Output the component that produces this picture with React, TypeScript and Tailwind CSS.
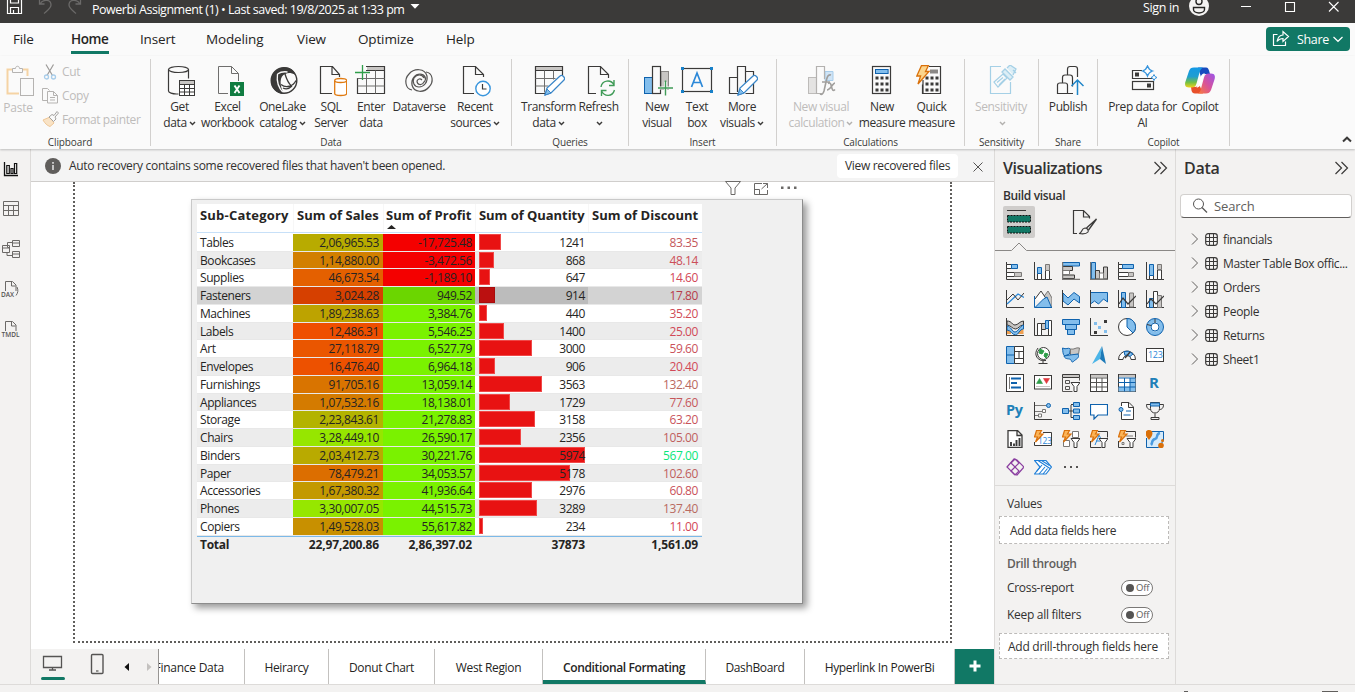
import React from "react";

type IconProps = { children: React.ReactNode; w?: number; h?: number; cls?: string };

const Svg = ({ children, w = 32, h = 32, cls = "" }: IconProps) => (
  <svg width={w} height={h} viewBox={`0 0 ${w} ${h}`} fill="none" className={`shrink-0 ${cls}`}>
    {children}
  </svg>
);

const INK = "#3b3a39";
const BLUE = "#0f62ad";
const SKY = "#83beec";
const ASH = "#c8c6c4";

const Caret = ({ color = INK }: { color?: string }) => (
  <svg width="7" height="5" viewBox="0 0 7 5" fill="none" className="ml-[2px] inline-block align-[1px]">
    <path d="M1 1l2.5 2.6L6 1" stroke={color} strokeWidth="1.4" />
  </svg>
);

/* ---------- ribbon icons, 32px wide boxes ---------- */

const Bolt = () => <path d="M5.500 .5h7l-3 6h3.500L2 19l2.600-8H.8z" fill="#fcd58c" stroke="#d9700a" strokeWidth="1.300" />;

const icons: Record<string, React.ReactNode> = {
  getData: (
    <Svg>
      <path d="M4.500 4.500v21.500c0 1.700 4 3 8 3h2M24.500 4.500v9" stroke={INK} strokeWidth="1.200" />
      <ellipse cx="14.500" cy="4.500" rx="10" ry="3" stroke={INK} strokeWidth="1.200" />
      <rect x="15.500" y="15.500" width="15" height="15" fill="#fff" stroke={INK} />
      <path d="M16 17.500h14" stroke={ASH} strokeWidth="3" />
      <path d="M15.500 19.500h15M15.500 23.500h15M15.500 27h15M20.500 19.500v11M25.500 19.500v11" stroke={INK} />
    </Svg>
  ),
  excel: (
    <Svg>
      <path d="M16 28.500H6.500v-27h13l7 7V16M19.500 1.500v7h7" stroke="#6f6e6d" />
      <rect x="18" y="17" width="14" height="14" fill="#107c41" />
      <path d="M22.500 20.500l5 7.500M27.500 20.500l-5 7.500" stroke="#fff" strokeWidth="1.900" />
    </Svg>
  ),
  onelake: (
    <Svg>
      <path d="M12 4C18 0 27 3 28.500 10 24 7.500 21 7.500 18.500 9 12 11 12.500 21 17 29 9 29 3.500 22 4 15 4.500 9 8 5.500 12 4z" fill={INK} />
      <path d="M10.500 9c-1 7 1 14 6 19M10.500 9c3-2 7-2.500 10-2" stroke="#fafafa" strokeWidth="1.300" />
      <circle cx="17" cy="15.500" r="12.800" stroke={INK} strokeWidth="1.400" />
      <path d="M18 9c1.500 5 3 9 6.500 12M14 19.500c5 4 12 2 15-4M25 21c-3 3-6 3.500-9 2" stroke={INK} strokeWidth="1.300" />
    </Svg>
  ),
  sql: (
    <Svg>
      <path d="M17 28.500H5.500v-27h12l7 8V12M17 1.500v8h8" stroke={INK} strokeWidth="1.200" />
      <path d="M19.700 15.500v13c0 1 2.500 2 6 2s6-1 6-2v-13" fill="#fff" stroke="#e07a10" strokeWidth="1.300" />
      <ellipse cx="25.700" cy="15.500" rx="6" ry="2" fill="#fff" stroke="#e07a10" strokeWidth="1.300" />
    </Svg>
  ),
  enter: (
    <Svg>
      <path d="M12 3.500h17" stroke={ASH} strokeWidth="4" />
      <path d="M11 1.500h18.500v27H2.500V13M11 5.500h18.500" stroke={INK} strokeWidth="1.200" />
      <path d="M2.500 13.500h27M2.500 21h27M11.500 9v19.500M20.500 5.500v23" stroke="#6f6e6d" />
      <path d="M7.500 0v15M0 7.500h15" stroke="#2f9e4a" strokeWidth="1.300" />
    </Svg>
  ),
  dataverse: (
    <Svg>
      <path
        d="M9 25C2 24 1 14 6 9c5-6 16-6 18 2 1 6-3 11-8 11-5 0-7-5-5-9 3-4 8-4 10 0M23 7c7 1 8 10 3 15-5 6-15 6-17-2-1-6 3-11 8-11 5 0 7 5 4 8-2 4-7 3-7-1 1-2 3-3 5-1"
        stroke="#555453"
        strokeWidth="1.200"
      />
    </Svg>
  ),
  recent: (
    <Svg>
      <path d="M15 28.500H4.500v-27h12l8 8V12M16.500 1.500v8h8" stroke={INK} strokeWidth="1.200" />
      <circle cx="24" cy="23.500" r="7.200" fill="#fff" stroke="#3a96dd" strokeWidth="1.400" />
      <path d="M23.500 19V24H27.500" stroke={INK} strokeWidth="1.200" />
    </Svg>
  ),
  transform: (
    <Svg>
      <path d="M3 3.500h27" stroke={ASH} strokeWidth="4" />
      <path d="M13 28.500H2.500v-27h27v9M2.500 5.500h27" stroke={INK} strokeWidth="1.200" />
      <path d="M2.500 13.500h20M2.500 21h13M11.500 5.500v22M20.500 5.500v9" stroke="#6f6e6d" />
      <path d="M12 30l2-7L27 11c2-2 6 2 4 4L18 28z" fill="#fff" stroke="#3a86c8" strokeWidth="1.300" />
      <path d="M12 30l2-6 4 4z" fill={SKY} stroke="#3a86c8" />
    </Svg>
  ),
  refresh: (
    <Svg>
      <path d="M13 28.500H5.500v-27h12l8 8V13M17.500 1.500v8h8" stroke={INK} strokeWidth="1.200" />
      <path d="M18 22c1-7 10-8 13-2M31 15v5.500h-5M31.500 25c-2 7-10 7-13 1M18.500 31v-5.500h5" stroke="#3f9b57" strokeWidth="1.400" />
    </Svg>
  ),
  newVisual: (
    <Svg>
      <rect x="3.500" y="12.500" width="8" height="16" fill={SKY} stroke={BLUE} />
      <rect x="20" y="6.500" width="7.500" height="18" fill={ASH} stroke="#8a8886" />
      <rect x="11.500" y="1.500" width="8" height="27" fill="#fafafa" stroke={INK} strokeWidth="1.200" />
      <path d="M24.500 17v13M18 23h12.500" stroke="#fafafa" strokeWidth="3" />
      <path d="M24.500 15.500v15M17 23h15" stroke="#3f9b57" strokeWidth="1.400" />
    </Svg>
  ),
  textBox: (
    <Svg>
      <rect x="1.500" y="3.500" width="29" height="23" stroke={INK} strokeWidth="1.200" />
      <path d="M10.500 22L16 8l5.500 14M12.500 17.500h7" stroke="#2b88d8" strokeWidth="1.700" />
      <path d="M0 2h3v3H0zM29 2h3v3h-3zM0 25h3v3H0zM29 25h3v3h-3z" fill="#1880c8" />
    </Svg>
  ),
  moreVisuals: (
    <Svg>
      <path d="M11.500 12.500h-8v16h9M19.500 6.500h8v6M27.500 18v10.500h-8M11.500 27v-25.500h8v17" stroke={INK} strokeWidth="1.200" />
      <path d="M12 30l2-7L27 11c2-2 6 2 4 4L18 28z" fill="#fff" stroke="#3a86c8" strokeWidth="1.300" />
      <path d="M12 30l2-6 4 4z" fill={SKY} stroke="#3a86c8" />
    </Svg>
  ),
  visualCalc: (
    <Svg>
      <rect x="3.500" y="12.500" width="8" height="16" fill="#e4e3e2" stroke="#bdbbb9" />
      <path d="M20 6.500h8v9h-8z" fill="#cfe4f6" stroke="#a8cdea" />
      <path d="M19.500 14V1.500h-8v27h6" stroke="#b3b1af" strokeWidth="1.200" />
      <path d="M26 10c-3-1-4 2-5 7l-2 9c-1 3-2 4-4 3M17 17h8M23 18.500c3-2 3 2 4 5s2 2 3 1M30 18c-2 0-5 7-8 7" stroke="#a19f9d" strokeWidth="1.600" />
    </Svg>
  ),
  measure: (
    <Svg>
      <rect x="6.500" y="1.500" width="18" height="27" stroke={INK} strokeWidth="1.200" />
      <rect x="9.500" y="4.500" width="12.600" height="4" fill={SKY} stroke={BLUE} />
      <path d="M9.500 13h13M9.500 19h13M9.500 25h13" stroke={INK} strokeWidth="3" strokeDasharray="3 2" />
    </Svg>
  ),
  quick: (
    <Svg>
      <path d="M7 28.500V15M13 1.500h11.500v27H6.500v-9" stroke={INK} strokeWidth="1.200" />
      <path d="M14 6.500h8" stroke="#8a8886" strokeWidth="4" />
      <path d="M9.500 13h13M9.500 19h13M9.500 25h13" stroke={INK} strokeWidth="3" strokeDasharray="3 2" />
      <Bolt />
    </Svg>
  ),
  sensitivity: (
    <Svg>
      <path d="M16 1.500H5.500v27h20V17" stroke="#a5d0e6" strokeWidth="1.200" />
      <path d="M9 17l9-8 4 4-9 9zM12 17.500l6-5M14 20l6-6" stroke="#a5d0e6" strokeWidth="1.200" />
      <path d="M17 7l3-3 8 8-3 3zM22 3l3-3 6 4-3 6M28 5l3 3" fill="#dceef6" stroke="#a5d0e6" strokeWidth="1.300" />
    </Svg>
  ),
  publish: (
    <Svg>
      <path d="M21 28.500H5.500V20c0-1.500 1-2 2.500-2h5c1.500 0 2.500.5 2.500 2v8.500M10.500 18v-5.500c0-1.500 1-2.500 2.500-2.500h5c1.500 0 2.500 1 2.500 2.500v9M15.500 10V4c0-1.500 1-2.500 2.500-2.500h5c1.500 0 2.500 1 2.500 2.500v8" stroke={INK} strokeWidth="1.200" />
      <path d="M25.500 30V15M19.500 21l6-6 6 6" stroke="#1f86c9" strokeWidth="1.500" />
    </Svg>
  ),
  prep: (
    <Svg>
      <path d="M15 5.500H5.500v8h21V13" stroke={INK} strokeWidth="1.200" />
      <rect x="5.500" y="16.500" width="21" height="8" stroke={INK} strokeWidth="1.200" />
      <path d="M8 7.500h4v4H8zM20 18.500h4v4h-4z" fill={INK} />
      <path d="M20.500 1c1 3 2 4 5 5-3 1-4 2-5 5-1-3-2-4-5-5 3-1 4-2 5-5z" fill="#fff" stroke="#3a96dd" strokeWidth="1.300" />
      <path d="M27 9.500l1 2 2 1-2 1-1 2-1-2-2-1 2-1z" fill="#fff" stroke="#3a96dd" />
    </Svg>
  ),
  copilot: (
    <Svg>
      <defs>
        <linearGradient id="cpA" x1="0" y1="0" x2="0" y2="1">
          <stop offset="0" stopColor="#1399e6" />
          <stop offset=".45" stopColor="#1f9ed0" />
          <stop offset=".75" stopColor="#75c043" />
          <stop offset="1" stopColor="#f2d21a" />
        </linearGradient>
        <linearGradient id="cpB" x1="1" y1="0" x2="0" y2="1">
          <stop offset="0" stopColor="#9a55ea" />
          <stop offset=".5" stopColor="#d6529c" />
          <stop offset="1" stopColor="#fb7a38" />
        </linearGradient>
      </defs>
      <path d="M14 2.500h8c2 0 2.500 1.500 3 3l1 3.500h-5c-2 0-3 1-4 3z" fill="#174bbf" />
      <path d="M19 28.500h-8c-2 0-3-1-3.500-3L7 22h4c2 0 3-1 4-3z" fill="#e8502a" />
      <path d="M10 2.500h9c-2 1-3 3-3.500 5l-3 11c-1 3-2 4-5 4H5c-4 0-4.500-3-3.500-6L5 6c1-2.500 2-3.500 5-3.500z" fill="url(#cpA)" />
      <path d="M25 8.500h2c4 0 4.500 3 3.500 6L27 25c-1 2.500-2.500 3.500-5 3.500h-8c2-1 2.500-3 3-5l3-11c1-3 2-4 5-4z" fill="url(#cpB)" />
      <path d="M17 11c1-2 2-2.500 4-2.500-2 2-3 8-5 12-.8 1.500-2 2-3.500 2C15 19 15.500 15 17 11z" fill="#fff" />
    </Svg>
  ),
};

type Item = { id: string; l1: string; l2?: string; w: string; caret?: boolean; off?: boolean };
type Group = { name: string; w: string; pl: string; items: Item[] };

const groups: Group[] = [
  {
    name: "Data",
    w: "w-[361px]",
    pl: "pl-[7px]",
    items: [
      { id: "getData", l1: "Get", l2: "data", w: "w-[43px]", caret: true },
      { id: "excel", l1: "Excel", l2: "workbook", w: "w-[53px]" },
      { id: "onelake", l1: "OneLake", l2: "catalog", w: "w-[57px]", caret: true },
      { id: "sql", l1: "SQL", l2: "Server", w: "w-[40px]" },
      { id: "enter", l1: "Enter", l2: "data", w: "w-[40px]" },
      { id: "dataverse", l1: "Dataverse", w: "w-[56px]" },
      { id: "recent", l1: "Recent", l2: "sources", w: "w-[56px]", caret: true },
    ],
  },
  {
    name: "Queries",
    w: "w-[117px]",
    pl: "pl-[8px]",
    items: [
      { id: "transform", l1: "Transform", l2: "data", w: "w-[57px]", caret: true },
      { id: "refresh", l1: "Refresh", l2: "", w: "w-[43px]", caret: true },
    ],
  },
  {
    name: "Insert",
    w: "w-[148px]",
    pl: "pl-[8px]",
    items: [
      { id: "newVisual", l1: "New", l2: "visual", w: "w-[40px]" },
      { id: "textBox", l1: "Text", l2: "box", w: "w-[40px]" },
      { id: "moreVisuals", l1: "More", l2: "visuals", w: "w-[50px]", caret: true },
    ],
  },
  {
    name: "Calculations",
    w: "w-[188px]",
    pl: "pl-[8px]",
    items: [
      { id: "visualCalc", l1: "New visual", l2: "calculation", w: "w-[72px]", caret: true, off: true },
      { id: "measure", l1: "New", l2: "measure", w: "w-[50px]" },
      { id: "quick", l1: "Quick", l2: "measure", w: "w-[49px]" },
    ],
  },
  {
    name: "Sensitivity",
    w: "w-[74px]",
    pl: "pl-[8px]",
    items: [{ id: "sensitivity", l1: "Sensitivity", l2: "", w: "w-[56px]", caret: true, off: true }],
  },
  { name: "Share", w: "w-[59px]", pl: "pl-[7px]", items: [{ id: "publish", l1: "Publish", w: "w-[44px]" }] },
  {
    name: "Copilot",
    w: "w-[132px]",
    pl: "pl-[8px]",
    items: [
      { id: "prep", l1: "Prep data for", l2: "AI", w: "w-[73px]" },
      { id: "copilot", l1: "Copilot", w: "w-[42px]" },
    ],
  },
];

const TitleBar = () => (
  <div className="flex h-[23px] shrink-0 items-start overflow-hidden bg-[#3b3a39] text-white">
    <Svg w={60} h={23} cls="">
      <path d="M7.500-2h12l2 2v13.500h-14zM10.500-1v4h8v-4M10.500 13.500v-6h8v6M13.500 13V10" stroke="#fff" strokeWidth="1.200" />
      <path d="M39.500-1v5h5M40 4c3-5 11-5 11 1 0 3-3 5-7 8.500" stroke="#6b6a69" strokeWidth="1.300" />
    </Svg>
    <Svg w={32} h={23} cls="">
      <path d="M20.500-1v5h-5M20 4C17-1 9-1 9 5c0 3 3 5 7 8.500" stroke="#6b6a69" strokeWidth="1.300" />
    </Svg>
    <div className="mt-px flex h-[19px] w-[313px] items-center whitespace-nowrap text-[12.5px] tracking-[-0.48px]">
      Powerbi Assignment (1) • Last saved: 19/8/2025 at 1:33 pm
    </div>
    <Svg w={20} h={23}>
      <path d="M5.500 4h9L10 8.800z" fill="#fff" />
    </Svg>
    <div className="ml-[718px] w-[46px] whitespace-nowrap text-[12.500px] leading-[15px] tracking-[-0.35px]">Sign in</div>
    <Svg w={22} h={23}>
      <circle cx="10" cy="6" r="10" fill="#f3f2f1" />
      <circle cx="10" cy="1.500" r="3" stroke="#252423" strokeWidth="1.400" />
      <path d="M4.500 7.500h11v2c0 2-2.500 3.500-5.500 3.500s-5.500-1.500-5.500-3.500z" stroke="#252423" strokeWidth="1.400" />
    </Svg>
    <Svg w={142} h={23} cls="ml-[2px]">
      <path d="M28 6.500h10M72.500 2.500h9v9h-9zM116 2l9.500 9.500M125.500 2L116 11.500" stroke="#fff" strokeWidth="1.100" />
    </Svg>
  </div>
);

const menu = [
  { t: "File", w: "w-[58px]" },
  { t: "Home", w: "w-[69px]", on: true },
  { t: "Insert", w: "w-[66px]" },
  { t: "Modeling", w: "w-[91px]" },
  { t: "View", w: "w-[61px]" },
  { t: "Optimize", w: "w-[88px]" },
  { t: "Help", w: "w-[60px]" },
];

const MenuBar = () => (
  <div className="flex h-[33px] shrink-0 items-start bg-[#fafafa] pl-[13px] text-[13.5px] text-[#252423]">
    {menu.map((m) => (
      <div key={m.t} className={`shrink-0 ${m.w}`}>
        <div
          className={
            m.on
              ? "flex h-[31px] w-[38px] items-center border-b-[3px] border-[#117865] pt-[4px] font-semibold tracking-[-0.45px]"
              : "flex h-[28px] items-center pt-[4px] tracking-[-0.15px]"
          }
        >
          {m.t}
        </div>
      </div>
    ))}
    <div className="mt-[4px] mr-[5px] ml-auto flex h-[24px] w-[84px] items-center rounded-[4px] bg-[#117865] pl-[6px] text-[12.5px] tracking-[-0.35px] text-white">
      <Svg w={18} h={18}>
        <path d="M5.500 4.500h-4v11h12v-4M5 11.500c1-5 4-6.500 6-6.500V1.500l5.500 5-5.500 5V8.500c-2 0-4 .5-6 3z" stroke="#fff" strokeWidth="1.200" />
      </Svg>
      <span className="mt-[2px] ml-[7px]">Share</span>
      <Svg w={12} h={8} cls="ml-[3px]">
        <path d="M1.500 2L6 6.300 10.500 2" stroke="#fff" strokeWidth="1.200" />
      </Svg>
    </div>
  </div>
);

const Clipboard = () => (
  <div className="flex w-[151px] shrink-0 flex-col border-r border-[#d2d0ce] pr-[10px] text-[#bebcba]">
    <div className="flex h-[76px] shrink-0">
      <div className="flex w-[42px] shrink-0 flex-col items-center pr-[6px]">
        <Svg cls="mt-[6px]">
          <path d="M10 4.500H5.500v24H17M21 4.500h4.500V11" stroke="#f5d3a4" strokeWidth="2" />
          <path d="M10.500 7.500v-4h3c0-3 4-3 4 0h3v4z" stroke="#b5b3b1" />
          <rect x="18.500" y="13.500" width="13" height="17" fill="#fafafa" stroke="#b5b3b1" />
        </Svg>
        <div className="mt-[3px] text-[12px] leading-[16px] tracking-[-0.2px]">Paste</div>
      </div>
      <div className="flex flex-col text-[12px] tracking-[-0.38px]">
        <div className="flex h-[24px] items-center pt-[2px]">
          <Svg w={16} h={18} cls="mr-[4px]">
            <path d="M4 1.500l6.500 11M11.500 1.500L5 12.500" stroke="#9c9a98" strokeWidth="1.200" />
            <circle cx="4.500" cy="14" r="2" stroke="#a8cdea" strokeWidth="1.300" />
            <circle cx="11.500" cy="14" r="2" stroke="#a8cdea" strokeWidth="1.300" />
          </Svg>
          Cut
        </div>
        <div className="flex h-[24px] items-center pt-[2px]">
          <Svg w={17} h={18} cls="mr-[3px]">
            <path d="M5 13.500H.500v-12h5l2 2" stroke="#b5b3b1" />
            <path d="M5.500 4.500h6l4 4v7.500h-10zM11.500 4.500v4h4M8 10.500h5M8 13h5" stroke="#b5b3b1" />
          </Svg>
          Copy
        </div>
        <div className="flex h-[24px] items-center whitespace-nowrap pt-[2px]">
          <Svg w={17} h={18} cls="mr-[3px]">
            <path d="M1 9l7-3 4 6-4 3.500c-3-1-5-3-7-6.500z" fill="#f9e3c6" stroke="#efc797" />
            <path d="M7 6l3-2.500 2 1 3-4 1.500 1.500-3.500 4 1 2-2.500 2.500z" fill="#fafafa" stroke="#a3a19f" />
          </Svg>
          Format painter
        </div>
      </div>
    </div>
    <div className="text-center text-[10px] leading-[14px] tracking-[-0.1px] text-[#3b3a39]">Clipboard</div>
  </div>
);

const Ribbon = () => (
  <div className="flex h-[93px] shrink-0 bg-[#fafafa] pt-[3px] pb-[3px] text-[#323130]">
    <Clipboard />
    {groups.map((g) => (
      <div key={g.name} className={`flex shrink-0 flex-col border-r border-[#d2d0ce] ${g.w}`}>
        <div className={`flex h-[76px] shrink-0 ${g.pl}`}>
          {g.items.map((it) => (
            <div key={it.id} className={`flex shrink-0 flex-col items-center ${it.w}`}>
              <div className="mt-[6px] h-[34px]">{icons[it.id]}</div>
              <div
                className={`text-center text-[12px] leading-[16px] tracking-[-0.38px] whitespace-nowrap ${it.off ? "text-[#bebcba]" : "text-[#323130]"}`}
              >
                <div>{it.l1}</div>
                <div>
                  {it.l2}
                  {it.caret && <Caret color={it.off ? "#b3b1af" : INK} />}
                </div>
              </div>
            </div>
          ))}
        </div>
        <div className="text-center text-[10px] leading-[14px] tracking-[-0.15px] text-[#3b3a39]">{g.name}</div>
      </div>
    ))}
    <div className="flex flex-1 items-end justify-end pr-[3px] pb-[3px]">
      <Svg w={10} h={7}>
        <path d="M1 5.500L5 1.700l4 3.800" stroke={INK} strokeWidth="2" />
      </Svg>
    </div>
  </div>
);

const Rail = () => (
  <div className="flex w-[31px] shrink-0 flex-col border-r border-[#dddbd9] bg-[#f3f2f1] pt-px">
    <Svg w={30} h={200}>
      <path d="M4.500 12v13.500H18" stroke="#111" strokeWidth="1.300" />
      <path d="M6.800 15.500h2.500v8H6.800zM11 18.500h2v5h-2zM14.500 13.500h2.200v10h-2.200z" stroke="#111" strokeWidth="1.200" />
      <path d="M3.500 51.500h15v14h-15zM3.500 55.500h15M3.500 60.500h15M8.500 55.500v10M13.500 55.500v10" stroke="#6b6967" />
      <path d="M12.500 90.500h7v6h-7zM12.500 93h7M12.500 101.500h7v6h-7zM12.500 104h7M2.500 95.500h7v7h-7zM2.500 98h7M9.500 97.500h-2v-5h5M7 102.500v3h5.500" stroke="#6b6967" />
      <path d="M5.500 141v-9.500h7l3.500 3.500v6M11.500 131.500v4.500h4M17 137c1.500 3 1 6-1 8.500" stroke="#6b6967" />
      <path d="M5.500 181v-9.500h7l3.500 3.500v6M11.500 171.500v4.500h4" stroke="#6b6967" />
      <text x="1" y="146.500" fontSize="6.500" fontWeight="600" fill="#555453">DAX</text>
      <text x="1.500" y="187" fontSize="6.500" fontWeight="600" fill="#555453">TMDL</text>
    </Svg>
  </div>
);

type Row = [string, string, string, number, string, string, string, string];

const G = "bg-[#7af200]";
const R = "bg-[#f40000]";
const rows: Row[] = [
  ["Tables", "2,06,965.53", "-17,725.48", 1241, "83.35", "bg-[#b8ab00]", R, "text-[#c4585c]"],
  ["Bookcases", "1,14,880.00", "-3,472.56", 868, "48.14", "bg-[#d27f00]", R, "text-[#cc4f59]"],
  ["Supplies", "46,673.54", "-1,189.10", 647, "14.60", "bg-[#e46000]", R, "text-[#d34756]"],
  ["Fasteners", "3,024.28", "949.52", 914, "17.80", "bg-[#d64000]", "bg-[#6bd600]", "text-[#b83c4a]"],
  ["Machines", "1,89,238.63", "3,384.76", 440, "35.20", "bg-[#bda300]", G, "text-[#cf4c58]"],
  ["Labels", "12,486.31", "5,546.25", 1400, "25.00", "bg-[#ef4f00]", G, "text-[#d14957]"],
  ["Art", "27,118.79", "6,527.79", 3000, "59.60", "bg-[#ea5600]", G, "text-[#ca525a]"],
  ["Envelopes", "16,476.40", "6,964.18", 906, "20.40", "bg-[#ed5100]", G, "text-[#d24957]"],
  ["Furnishings", "91,705.16", "13,059.14", 3563, "132.40", "bg-[#d97400]", G, "text-[#ba6860]"],
  ["Appliances", "1,07,532.16", "18,138.01", 1729, "77.60", "bg-[#d47b00]", G, "text-[#c6575b]"],
  ["Storage", "2,23,843.61", "21,278.83", 3158, "63.20", "bg-[#b3b300]", G, "text-[#c9535a]"],
  ["Chairs", "3,28,449.10", "26,590.17", 2356, "105.00", "bg-[#96e600]", G, "text-[#c0605e]"],
  ["Binders", "2,03,412.73", "30,221.76", 5974, "567.00", "bg-[#b9aa00]", G, "text-[#0ae67a] font-medium"],
  ["Paper", "78,479.21", "34,053.57", 5178, "102.60", "bg-[#dc6e00]", G, "text-[#c05f5e]"],
  ["Accessories", "1,67,380.32", "41,936.64", 2976, "60.80", "bg-[#c39900]", G, "text-[#ca525a]"],
  ["Phones", "3,30,007.05", "44,515.73", 3289, "137.40", "bg-[#96e700]", G, "text-[#b96a60]"],
  ["Copiers", "1,49,528.03", "55,617.82", 234, "11.00", "bg-[#c89000]", G, "text-[#d34656]"],
];

const TableVisual = () => (
  <div className="relative mt-[16px] ml-[116px] h-[405px] w-[612px] border border-t-[#c9c9c9] border-r-[#8c8c8c] border-b-[#8c8c8c] border-l-[#c9c9c9] bg-[#f0f0f0] shadow-[4px_4px_7px_rgba(0,0,0,0.4)]">
    <div className="absolute top-[-20px] left-[532px] flex gap-[10px]">
      <Svg w={18} h={16}>
        <path d="M1.500 1.500h15l-5.500 6.500v6.500h-4v-6.500z" stroke="#6b6967" />
      </Svg>
      <Svg w={18} h={16}>
        <path d="M10 3.500H2.500v11h13V10M2.500 9.500h5v5M11 3.500h4.500V8M15.500 3.500L9.500 9" stroke="#6b6967" />
      </Svg>
      <Svg w={18} h={16}>
        <path d="M1 6.500h2.500v2.500H1zM7.500 6.500h2.500v2.500H7.500zM14 6.500h2.500v2.500H14z" fill="#6b6967" />
      </Svg>
    </div>
    <div className="mt-[4px] ml-[5px] w-[505px] text-[12px] tracking-[-0.42px] text-[#252423]">
      <div className="flex h-[29px] border-b border-[#c7e0f8] bg-white text-[13px] leading-[22px] font-bold whitespace-nowrap tracking-[0.03px]">
        <div className="w-[96px] pl-[3px] tracking-[0.2px]">Sub-Category</div>
        <div className="w-[90px] border-l border-[#f7f7f7] pl-[3px]">Sum of Sales</div>
        <div className="relative w-[92px] border-l border-[#f7f7f7] pl-[2px]">
          Sum of Profit
          <svg width="9" height="4" viewBox="0 0 9 4" className="absolute top-[21px] left-[3px]">
            <path d="M4.500 0L9 4H0z" fill="#252423" />
          </svg>
        </div>
        <div className="w-[113px] border-l border-[#f7f7f7] pl-[3px] tracking-[-0.05px]">Sum of Quantity</div>
        <div className="w-[114px] border-l border-[#f7f7f7] pl-[3px]">Sum of Discount</div>
      </div>
      <div className="bg-white pt-[0.8px]">
        {rows.map((r, i) => {
          const hot = r[0] === "Fasteners";
          const bg = hot ? "bg-[#d3d3d3]" : i % 2 ? "bg-[#ececec]" : "bg-white";
          return (
            <div key={r[0]} className={`flex h-[17.75px] border-b border-[#e8e8e8] leading-[18px] whitespace-nowrap ${bg}`}>
              <div className="w-[96px] pl-[3px]">{r[0]}</div>
              <div className={`w-[90px] pr-[4px] text-right ${r[5]}`}>{r[1]}</div>
              <div className={`w-[92px] pr-[3px] text-right ${r[6]}`}>{r[2]}</div>
              <div className={`grid w-[113px] pl-[4px] ${hot ? "bg-[#bcbcbc]" : ""}`}>
                <div
                  className={`col-start-1 row-start-1 h-[16px] border ${hot ? "border-[#a80c0c] bg-[#bb1010]" : "border-[#f04848] bg-[#e81212]"}`}
                  style={{ width: (r[3] / 5974) * 105.5 }}
                />
                <div className="col-start-1 row-start-1 pr-[3px] text-right">{r[3]}</div>
              </div>
              <div className={`w-[114px] pr-[4px] text-right ${r[7]}`}>{r[4]}</div>
            </div>
          );
        })}
      </div>
      <div className="flex h-[19px] border-t border-[#7cb9e8] text-[12px] leading-[16px] font-bold tracking-[-0.15px]">
        <div className="w-[96px] pl-[3px] tracking-[-0.3px]">Total</div>
        <div className="w-[90px] pr-[4px] text-right">22,97,200.86</div>
        <div className="w-[92px] pr-[3px] text-right">2,86,397.02</div>
        <div className="w-[113px] pr-[3px] text-right">37873</div>
        <div className="w-[114px] pr-[4px] text-right">1,561.09</div>
      </div>
    </div>
  </div>
);

const tabs = [
  { t: "Heirarcy", w: "w-[84px]" },
  { t: "Donut Chart", w: "w-[106px]" },
  { t: "West Region", w: "w-[108px]" },
  { t: "Conditional Formating", w: "w-[163px]", on: true },
  { t: "DashBoard", w: "w-[99px]" },
  { t: "Hyperlink In PowerBi", w: "w-[150px]" },
];

const PageTabs = () => (
  <div className="flex h-[35px] shrink-0 bg-white text-[12px] tracking-[-0.35px] whitespace-nowrap text-[#252423]">
    <div className="flex w-[128px] shrink-0 border-r border-[#979593] bg-[#f3f2f1]">
      <Svg w={127} h={35}>
        <path d="M12.500 7.500h18v11h-18zM21.500 19v2M18 21h7" stroke="#555453" strokeWidth="1.300" />
        <rect x="10" y="28" width="24" height="3" rx="1.500" fill="#117865" />
        <rect x="60.500" y="5.500" width="11.500" height="19" rx="1" stroke="#555453" strokeWidth="1.400" />
        <path d="M65 22h2.500" stroke="#555453" strokeWidth="1.200" />
        <path d="M98 14v8l-4.500-4z" fill="#111" />
        <path d="M116 14v8l4.500-4z" fill="#c3c1bf" />
      </Svg>
    </div>
    <div className="flex w-[86px] shrink-0 justify-end overflow-hidden border-r border-[#c3c1bf] pt-[3px] pr-[20px] leading-[32px] tracking-[-0.25px]">
      <span>Finance Data</span>
    </div>
    {tabs.map((t) => (
      <div
        key={t.t}
        className={`shrink-0 border-r border-[#c3c1bf] text-center leading-[32px] ${t.w} ${
          t.on ? "h-[35px] border-b-4 border-b-[#117865] pt-[3px] font-semibold tracking-[-0.36px]" : "pt-[3px]"
        }`}
      >
        {t.t}
      </div>
    ))}
    <div className="flex w-[39px] shrink-0 items-center justify-center bg-[#117865]">
      <Svg w={12} h={12} cls="mb-[2px]">
        <path d="M6 .500v11M.500 6h11" stroke="#fff" strokeWidth="3" />
      </Svg>
    </div>
  </div>
);

const Axis = () => <path d="M.500 0v17.500H18" stroke={INK} />;
const MiniBolt = () => <path d="M2.500 .500h5L5.500 4H9L1.500 12l2-5H.500z" fill="#fcb558" stroke="#d9700a" strokeWidth="1.200" />;
const Funnel = () => <path d="M9 8.500h9l-3 4v5h-3v-5z" fill="#fff" stroke={INK} />;

const viz: React.ReactNode[] = [
  <><Axis /><path d="M.500 2.500h5v4h-5zM.500 10.500h8v4h-8z" stroke={INK} fill="#fff" /><path d="M5.500 2.500h6v4h-6z" fill={SKY} stroke={BLUE} /><path d="M8.500 10.500h7v4h-7z" fill={ASH} stroke="#7a7876" /></>,
  <><Axis /><path d="M3.500 11.500h4v6h-4zM11.500 8.500h4v9h-4z" stroke={INK} fill="#fff" /><path d="M3.500 5.500h4v6h-4z" fill={SKY} stroke={BLUE} /><path d="M11.500 2.500h4v6h-4z" fill={ASH} stroke="#7a7876" /></>,
  <><path d="M.500.500h17v3.500H.500z" fill={SKY} stroke={BLUE} /><path d="M.500 4.500h10v4H.500zM.500 13h12v3.500H.500z" stroke={INK} fill={ASH} /><path d="M.500 8.500h7v4H.500z" stroke="#7a7876" fill="#fff" /><path d="M.500 0v17.500H18" stroke="#7a7876" strokeWidth="1.500" /></>,
  <><path d="M1.500.500h4v16.500h-4z" fill={SKY} stroke={BLUE} /><path d="M5.500 8.500h4v8.500h-4zM13.500 5h4v12h-4z" stroke={INK} fill={ASH} /><path d="M9.500 11h4v6h-4z" stroke="#7a7876" fill="#fff" /><path d="M.500 0v17.500H18" stroke="#7a7876" strokeWidth="1.500" /></>,
  <><Axis /><path d="M.500 2.500h4v4h-4zM.500 10.500h10v4h-10z" stroke={INK} fill="#fff" /><path d="M4.500 2.500h11v4h-11z" fill={SKY} stroke={BLUE} /><path d="M10.500 10.500h5v4h-5z" fill={ASH} stroke="#7a7876" /></>,
  <><Axis /><path d="M3.500 13h4v4.500h-4zM11.500 8h4v9.500h-4z" stroke={INK} fill="#fff" /><path d="M3.500 2.500h4v11h-4z" fill={SKY} stroke={BLUE} /><path d="M11.500 2.500h4v5h-4z" fill={ASH} stroke="#7a7876" /></>,
  <><Axis /><path d="M1 14l11-10 6 3.500" stroke="#2b88d8" strokeWidth="1.300" /><path d="M1 10l6-6 5 6 6-7" stroke={INK} /></>,
  <><path d="M8 9l6-8 4 7v9.500z" fill={ASH} stroke="#7a7876" /><path d="M1 9l6-8 6 9-2 3" stroke={INK} fill="#fff" /><path d="M1 17.500L9.500 9 13 7l4.500 10.500z" fill={SKY} stroke={BLUE} /><path d="M.500 6v11.500H18" stroke={BLUE} /></>,
  <><path d="M1 3l5 5 6-5.500 5.500 4V13l-5.500-4-6 6-5-4z" fill={SKY} stroke={BLUE} /><Axis /></>,
  <><path d="M.500 2.500h17V12l-4-3-5 5-4-3-4 3z" fill={SKY} stroke={BLUE} /><Axis /></>,
  <><Axis /><path d="M3.500 2.500h4v15h-4z" fill={SKY} stroke={BLUE} /><path d="M11.500 3h4v14h-4z" fill={ASH} stroke="#7a7876" /><path d="M1 14l4-6 5 6 8-8" stroke={INK} strokeWidth="1.200" /></>,
  <><Axis /><path d="M3.500 8.500h4v9h-4z" fill={SKY} stroke={BLUE} /><path d="M7.500 1.500h4v16h-4z" fill="#fff" stroke={INK} /><path d="M11.500 5.500h4v12h-4z" fill={ASH} stroke="#7a7876" /><path d="M1 14l4-5 5 5 8-8" stroke={INK} strokeWidth="1.200" /></>,
  <><path d="M1 12h4v4H1zM12 11h5.500v5H12z" fill="#f0a050" /><path d="M1 3c5 0 5 4 8 4s5-4 8.500-4v4c-4 0-5 4-8 4s-5-4-8.500-4z" fill={ASH} stroke={INK} /><path d="M1 8c4 0 5 6 8 6s5-6 8.500-7v4c-4 0-5 6-8 6s-5-5-8.500-5z" fill={SKY} stroke={BLUE} /><Axis /></>,
  <><Axis /><path d="M3.500 5.500h4v12h-4zM14.500 2.500h3v15h-3z" fill="#fff" stroke={INK} /><path d="M7.500 5.500h4v6h-4z" fill={ASH} stroke={INK} /><path d="M11.500 2.500h3v8h-3z" fill={SKY} stroke={BLUE} /></>,
  <><path d="M.500 1.500h17v5H.500zM3.500 6.500h11v5h-11zM5.500 11.500h7v5h-7z" fill={SKY} stroke={BLUE} /></>,
  <><Axis /><path d="M4 13h3v3H4zM14 2h3v3h-3z" fill={INK} /><path d="M4 4h3v3H4zM8 8h3v3H8zM14 12h3v3h-3z" fill={SKY} /></>,
  <><circle cx="9" cy="9" r="8.500" fill="#fff" stroke={INK} /><path d="M9 9V.500A8.500 8.500 0 0 1 15 15z" fill={SKY} stroke={BLUE} /></>,
  <><circle cx="9" cy="9" r="6.500" stroke={SKY} strokeWidth="4" /><circle cx="9" cy="9" r="8.500" stroke={BLUE} /><circle cx="9" cy="9" r="4" fill="#fff" stroke={BLUE} /><path d="M1 6.500l4 1M9 1v4" stroke={INK} /></>,
  <><path d="M.500.500h8v17h-8z" fill={SKY} stroke={BLUE} /><path d="M.500 9h8" stroke={BLUE} /><path d="M8.500.500h9v17h-9zM8.500 5.500h9M8.500 12.500h9M13 5.500v7" fill="#fff" stroke={INK} /></>,
  <><circle cx="9.500" cy="7.500" r="6" fill="#fff" stroke={INK} /><path d="M6 3l4 2-2 3-3-1zM11 7l3 1-2 4-2-2z" fill="#2f9e4a" stroke="#2f9e4a" /><path d="M4 2c-5 6-1 14 8 12.500M9 15v2M4.500 17.500h9" stroke={INK} /></>,
  <><path d="M.500 2c4 2 5-1 8 1l-1 5-5 2C.500 8 1 5 .500 2z" fill={SKY} stroke={BLUE} /><path d="M8.500 3c4 1 5-2 9-1l-1 6-8 2z" fill={ASH} stroke="#7a7876" /><path d="M2 10l6-1 8-1c2 4-2 5-4 7s-2 1-3-1-6 0-7-4z" fill={SKY} stroke={BLUE} /></>,
  <><path d="M12 0L2 18l8-5z" fill="#4bb5e8" /><path d="M12 0l4 18-6-5z" fill="#1c7ab8" /></>,
  <><path d="M.500 13.500a8.500 8.500 0 0 1 17 0H13c0-5-8-5-8 0z" fill="#fff" stroke={INK} /><path d="M6 5.500A8.500 8.500 0 0 1 15 8l-3 2.500c-1-1.500-3-2-5-1z" fill={SKY} stroke={BLUE} /><path d="M7 12l5-6" stroke={INK} strokeWidth="1.400" /></>,
  <><rect x=".500" y="2.500" width="17" height="13" fill="#fff" stroke={INK} /><text x="2" y="12.300" fontSize="9" letterSpacing="-.300" fill="#2b88d8">123</text></>,
  <><rect x=".500" y=".500" width="17" height="17" fill="#fff" stroke={INK} /><path d="M3.500 3v12" stroke="#7a7876" /><path d="M5 4.500h10M5 9h6M5 13.500h10" stroke={BLUE} strokeWidth="1.800" /></>,
  <><rect x=".500" y="1.500" width="17" height="13.500" fill="#fff" stroke={INK} /><path d="M2.500 9.500l3-5 3 5z" fill="#2f9e4a" stroke="#2f9e4a" strokeWidth=".600" /><path d="M9.500 4.500h6l-3 5z" fill="#e0393e" stroke="#e0393e" strokeWidth=".600" /><path d="M2 12.500h14" stroke={ASH} /></>,
  <><path d="M.500.500h17v3H.500z" fill={ASH} stroke={INK} /><path d="M.500 3.500v14h10M17.500 3.500v3M3.500 6.500h4v3h-4zM3.500 12.500h4v3h-4z" stroke="#555453" /><Funnel /></>,
  <><rect x=".500" y=".500" width="17" height="17" fill="#fff" stroke={INK} /><path d="M1 2h16" stroke={ASH} strokeWidth="2.500" /><path d="M.500 4h17M.500 8.500h17M.500 13h17M6.500 4v13.500M12 4v13.500" stroke="#555453" /></>,
  <><rect x=".500" y=".500" width="17" height="17" fill="#fff" stroke={INK} /><path d="M1 2h16" stroke={ASH} strokeWidth="2.500" /><path d="M12 4h5.500v13.500H.500V13H12z" fill={SKY} /><path d="M.500 4h17M.500 8.500h17M.500 13h17M6.500 4v13.500M12 4v13.500" stroke={BLUE} /></>,
  <text x="3" y="14" fontSize="15" fontWeight="700" fill="#2080b8">R</text>,
  <text x="0" y="12.500" fontSize="14.500" fontWeight="700" fill="#2080b8" letterSpacing="-.400">Py</text>,
  <><Axis /><path d="M1 3.500h12M1 9.500h8M1 13.500h4" stroke="#7a7876" /><circle cx="14.500" cy="3.500" r="2" fill={SKY} stroke={BLUE} /><path d="M8.500 7.500h3v3h-3zM4.500 12h3v3h-3z" stroke="#7a7876" fill="#fff" /></>,
  <><path d="M5 9h7M9 3v12.500M9 2.500h3M9 15.500h3" stroke={INK} /><path d="M.500 6.500h6v5h-6zM11.500.500h6v4h-6zM11.500 7h6v4h-6zM11.500 13.500h6v4h-6z" fill={SKY} stroke={BLUE} /></>,
  <path d="M.500 2.500h17v10.500H8l-4 4v-4H.500z" fill="#fff" stroke={BLUE} strokeWidth="1.200" />,
  <><path d="M3.500 4V.500H11l4.500 4.500v12.500h-12V10M10.500.500v5h5" fill="#fff" stroke={INK} /><path d="M5.500 13h7M8 9h5" stroke={BLUE} /><circle cx="3" cy="7.500" r="2" fill={SKY} stroke={BLUE} /></>,
  <><path d="M4.500.500h9v6c0 6-9 6-9 0zM4 2.500H.500c0 4 2 5 4 5M14 2.500h3.500c0 4-2 5-4 5M9 11.500v4M5 17.500v-2h8v2z" stroke={INK} /><path d="M4.500 1h9v3h-9z" fill={SKY} stroke={BLUE} /></>,
  <><path d="M2 .500h9.500l4.500 4.500v12.500H2zM11 .500V5.500h5" fill="#fff" stroke={INK} strokeWidth="1.300" /><path d="M5 12v4M8 13.500v2.500M10.500 10v6M13.500 8v8" stroke={INK} strokeWidth="1.900" /></>,
  <><path d="M9 2.500h8.500v13H.500V12" fill="#fff" stroke={INK} /><text x="4" y="13.500" fontSize="8.500" letterSpacing="-.300" fill="#2b88d8">123</text><MiniBolt /></>,
  <><path d="M10.500 1.500h6v6h-6zM1.500 10.500h6v6h-6z" stroke="#7a7876" fill="#fff" /><MiniBolt /><Funnel /></>,
  <><path d="M8 1.500h9.500v6M.500 11v6.500h11" stroke={INK} /><path d="M5 15l4-10 4 8M6 11h4" stroke="#2b88d8" /><MiniBolt /><Funnel /></>,
  <><path d="M8 1.500h9.500v6M.500 11v6.500h11" stroke={INK} /><path d="M4 12.500h2v2H4zM8 6h7" stroke="#7a7876" /><MiniBolt /><Funnel /></>,
  <><path d="M5 1.500h12.500v9l-5 7H.500V8" fill="#d6ebfa" stroke={BLUE} /><path d="M14 3c-5 1-1 5-5 6s-2 4-4 6" stroke="#4a9be0" strokeWidth="2.500" /><path d="M3 0c4 0 4 4 2.500 6.500L3 10 .500 6.500C-1 4-1 0 3 0z" fill="#d9700a" /><circle cx="15" cy="15.500" r="2.800" fill="#d9700a" /><circle cx="16.500" cy="10.500" r="1.500" fill="#d9700a" /></>,
  <><path d="M1 9l7-8 3 1 7 7-7 8-3-1z" stroke="#8b3fa0" strokeWidth="1.200" /><path d="M5 5l8 8M13 5l-8 8M9 1l-4 4 4 4 4-4zM9 9l4 4-4 4-4-4z" stroke="#8b3fa0" strokeWidth="1.200" /></>,
  <><path d="M.500 2.500H12l5.500 6.500-5.500 7H.500L6 9z" fill="#fff" stroke="#1f7fd8" strokeWidth="1.200" /><path d="M4 2.500l12 8M7.500 2.500l8 5M2.500 13.500L8 7M5 16l6-7M9 16l4.500-5.500" stroke="#1f7fd8" strokeWidth="1.100" /></>,
  <path d="M2 8h2v2H2zM8 8h2v2H8zM14 8h2v2h-2z" fill="#555453" />,
];

const Chevrons = () => (
  <Svg w={15} h={14}>
    <path d="M1.500 1l6 6-6 6M7.500 1l6 6-6 6" stroke={INK} strokeWidth="1.200" />
  </Svg>
);

const Toggle = () => (
  <div className="flex h-[16px] w-[32px] items-center rounded-full border border-[#7a7876] bg-white pl-[4px] text-[9.5px] tracking-[-0.2px] text-[#605e5c]">
    <div className="mr-[2px] h-[8px] w-[8px] rounded-full bg-[#555453]" />
    <span className="pt-px leading-[14px]">Off</span>
  </div>
);

const VizPane = () => (
  <div className="flex w-[182px] shrink-0 flex-col border-r border-l border-[#dddbd9] bg-[#f3f2f1] text-[12px] tracking-[-0.3px] text-[#323130]">
    <div className="flex h-[38px] items-center justify-between pr-[7px] pl-[8px]">
      <div className="text-[16px] font-semibold tracking-[-0.5px]">Visualizations</div>
      <Chevrons />
    </div>
    <div className="h-[19px] pl-[8px] leading-[17px] font-semibold tracking-[-0.35px]">Build visual</div>
    <div className="flex h-[44px] pl-[8px]">
      <div className="h-[32px] w-[32px] rounded-[2px] bg-[#cfcdcb]">
        <Svg>
          <path d="M4 4.500h19" stroke={INK} />
          <rect x="4.500" y="9.500" width="23" height="6.500" fill="#117865" stroke="#111" strokeDasharray="2 1" />
          <rect x="4.500" y="20.500" width="23" height="6.500" fill="#117865" stroke="#111" strokeDasharray="2 1" />
        </Svg>
      </div>
      <Svg cls="ml-[33px]">
        <path d="M9 27.500H5.500v-23h10l6 6v2M15.500 4.500v6.500h6" stroke={INK} strokeWidth="1.200" />
        <path d="M28.500 13l-10 9M28.500 13l-8 11" stroke={INK} strokeWidth="1.300" />
        <path d="M11 27.500c3 0 2-5 6-5.500 2 0 4 2 3 4-2 2.500-6 2-9 1.500z" stroke={INK} strokeWidth="1.200" />
      </Svg>
    </div>
    <Svg w={180} h={12} cls="mt-[-8px]">
      <path d="M0 8.500h16.500l7.500-7.500 7.500 7.500H180" stroke="#8a8886" />
    </Svg>
    <div className="mt-[8px] grid grid-cols-[repeat(6,18px)] gap-[10px] pl-[11px]">
      {viz.map((v, i) => (
        <svg key={i} width="18" height="18" viewBox="0 0 18 18" fill="none">
          {v}
        </svg>
      ))}
    </div>
    <div className="mt-[9px] border-t border-[#dddbd9] pt-[10px] pl-[12px] leading-[16px]">Values</div>
    <div className="mt-[4px] ml-[4px] flex h-[28px] w-[170px] items-center border border-dashed border-[#bdbbb9] bg-white pt-[2px] pl-[10px]">
      Add data fields here
    </div>
    <div className="mt-[11px] h-[19px] pl-[12px] leading-[17px] font-semibold tracking-[-0.33px] text-[#605e5c]">Drill through</div>
    <div className="flex h-[27px] items-center justify-between pr-[22px] pl-[12px]">
      Cross-report <Toggle />
    </div>
    <div className="flex h-[27px] items-center justify-between pr-[22px] pl-[12px]">
      Keep all filters <Toggle />
    </div>
    <div className="mt-[5px] ml-[4px] flex h-[26px] w-[170px] items-center border border-dashed border-[#bdbbb9] bg-white pt-[2px] pl-[8px] tracking-[-0.26px] whitespace-nowrap">
      Add drill-through fields here
    </div>
  </div>
);

const DataPane = () => (
  <div className="flex min-w-0 flex-1 flex-col bg-[#f3f2f1] text-[12px] tracking-[-0.36px] text-[#323130]">
    <div className="flex h-[38px] items-center justify-between pr-[6px] pl-[8px]">
      <div className="text-[16px] font-semibold tracking-[-0.3px]">Data</div>
      <Chevrons />
    </div>
    <div className="mt-[7px] ml-[4px] flex h-[24px] w-[172px] items-center rounded-[4px] border border-[#d2d0ce] border-b-[#605e5c] bg-white pl-[11px] text-[13px] tracking-[-0.1px] text-[#605e5c]">
      <Svg w={16} h={16} cls="mr-[6px]">
        <circle cx="6.500" cy="6" r="5" stroke="#555453" />
        <path d="M10 9.500l5 5" stroke="#555453" strokeWidth="1.200" />
      </Svg>
      <span className="pt-px">Search</span>
    </div>
    <div className="mt-[10px]">
      {["financials", "Master Table Box offic...", "Orders", "People", "Returns", "Sheet1"].map((t) => (
        <div key={t} className="flex h-[24px] items-center pl-[15px] whitespace-nowrap">
          <Svg w={8} h={14} cls="mr-[6px]">
            <path d="M1 .500l5.500 5.500-5.500 5.500" stroke="#605e5c" />
          </Svg>
          <Svg w={13} h={13} cls="mr-[5px] mb-px">
            <rect x=".700" y=".700" width="11.600" height="11.600" rx="2.500" stroke={INK} strokeWidth="1.200" />
            <path d="M1 4.500h11M1 8.500h11M4.500 1v11M8.500 1v11" stroke={INK} />
          </Svg>
          {t}
        </div>
      ))}
    </div>
  </div>
);

export default function App() {
  return (
    <div className="flex h-[692px] w-[1355px] flex-col overflow-hidden bg-[#f3f2f1] font-['Open_Sans','Noto_Sans',sans-serif]">
      <TitleBar />
      <MenuBar />
      <div className="relative shadow-[0_1px_2px_rgba(0,0,0,0.22)]">
        <Ribbon />
      </div>
      <div className="flex h-[536px] shrink-0 border-b border-[#dddbd9]">
        <Rail />
        <div className="flex w-[963px] shrink-0 flex-col bg-white">
          <div className="flex h-[33px] shrink-0 items-center border-b border-[#d0cecc] bg-[#f4f4f4] pt-px text-[12px] tracking-[-0.31px] text-[#323130]">
            <Svg w={16} h={16} cls="ml-[14px] mr-[8px]">
              <circle cx="8" cy="8" r="8" fill="#605e5c" />
              <path d="M8 4v1.800M8 7v5" stroke="#e8e8e8" strokeWidth="1.500" />
            </Svg>
            <span className="whitespace-nowrap">Auto recovery contains some recovered files that haven't been opened.</span>
            <div className="ml-auto flex h-[24px] w-[121px] items-center justify-center rounded-[4px] bg-white whitespace-nowrap">
              View recovered files
            </div>
            <Svg w={12} h={12} cls="mt-[2px] mr-[10px] ml-[14px]">
              <path d="M1.500 1.500l9 9M10.500 1.500l-9 9" stroke="#555453" />
            </Svg>
          </div>
          <div className="h-[467px] shrink-0 pl-[42px]">
            <div className="h-[461px] w-[879px] border-2 border-t-0 border-dotted border-[#605e5c] pt-px">
              <TableVisual />
            </div>
          </div>
          <PageTabs />
        </div>
        <VizPane />
        <DataPane />
      </div>
      <div className="flex h-[7px] shrink-0 items-end pr-[17px]">
        <div className="ml-auto h-px w-[4px] bg-[#605e5c]" />
        <div className="ml-[134px] h-px w-[16px] bg-[#605e5c]" />
      </div>
    </div>
  );
}
